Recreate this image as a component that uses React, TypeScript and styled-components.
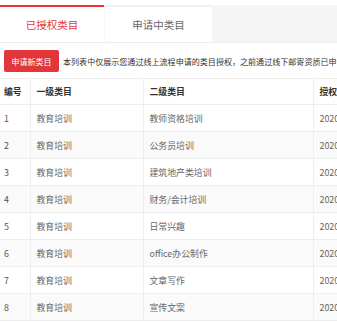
import React from "react"
import styled, { createGlobalStyle } from "styled-components"

const GlobalStyle = createGlobalStyle`
  html, body {
    margin: 0;
    padding: 0;
    background: #ffffff;
    overflow: hidden;
  }
  body {
    font-family: "Noto Sans CJK SC", "Noto Sans", sans-serif;
  }
`

const Page = styled.div`
  width: 337px;
  height: 322px;
  overflow: hidden;
  padding-top: 5px;
  box-sizing: border-box;
`

const TabBar = styled.div`
  display: flex;
  height: 37px;
  background: #f5f5f5;
  border-bottom: 1px solid #eeeeee;
`

const Tab = styled.div<{ $active?: boolean; $w: number }>`
  width: ${(p) => p.$w}px;
  margin-right: 1px;
  box-sizing: border-box;
  display: flex;
  align-items: center;
  justify-content: center;
  background: #ffffff;
  border-top: 2px solid ${(p) => (p.$active ? "#e8353a" : "#f0f0f0")};
  color: ${(p) => (p.$active ? "#e23a3e" : "#666666")};
  font-size: 10.5px;
  padding-bottom: 1px;
`

const Toolbar = styled.div`
  display: flex;
  align-items: center;
  padding: 7px 0 0 4px;
  height: 22px;
  gap: 4px;
  white-space: nowrap;
  overflow: hidden;
`

const ApplyButton = styled.button`
  width: 55px;
  height: 22px;
  border: none;
  border-radius: 2px;
  background: #e1363a;
  color: #ffffff;
  font-family: inherit;
  font-size: 8px;
  padding: 0;
  flex-shrink: 0;
`

const Notice = styled.span`
  font-size: 8.05px;
  color: #333333;
`

const TableWrap = styled.div`
  margin-top: 6px;
  width: 337px;
  overflow: hidden;
`

const Table = styled.table`
  border-collapse: collapse;
  table-layout: fixed;
  width: 472px;
  border-top: 1px solid #eeeeee;
`

const HeadCell = styled.th`
  height: 25px;
  padding: 0 6px;
  text-align: left;
  font-weight: bold;
  font-size: 8.9px;
  color: #333333;
  border-right: 1px solid #eeeeee;
  border-bottom: 1px solid #eeeeee;
  white-space: nowrap;
  overflow: hidden;

  &:first-child {
    padding-left: 4px;
  }
`

const Row = styled.tr<{ $even?: boolean }>`
  background: ${(p) => (p.$even ? "#fafafa" : "#ffffff")};
`

const Cell = styled.td`
  height: 26px;
  padding: 0 6px;
  font-size: 8.9px;
  color: #666666;
  border-right: 1px solid #eeeeee;
  border-bottom: 1px solid #eeeeee;
  white-space: nowrap;
  overflow: hidden;

  &:first-child {
    padding-left: 4px;
    color: #555555;
  }
`

const columns = [30, 113, 170, 159]

const rows = [
  "教师资格培训",
  "公务员培训",
  "建筑地产类培训",
  "财务/会计培训",
  "日常兴趣",
  "office办公制作",
  "文章写作",
  "宣传文案",
]

export default function App() {
  return (
    <Page>
      <GlobalStyle />
      <TabBar>
        <Tab $active $w={104}>已授权类目</Tab>
        <Tab $w={107}>申请中类目</Tab>
      </TabBar>
      <Toolbar>
        <ApplyButton>申请新类目</ApplyButton>
        <Notice>本列表中仅展示您通过线上流程申请的类目授权，之前通过线下邮寄资质已申请的类目请联系客服查询</Notice>
      </Toolbar>
      <TableWrap>
        <Table>
          <colgroup>
            {columns.map((w, i) => (
              <col key={i} style={{ width: w }} />
            ))}
          </colgroup>
          <thead>
            <tr>
              <HeadCell>编号</HeadCell>
              <HeadCell>一级类目</HeadCell>
              <HeadCell>二级类目</HeadCell>
              <HeadCell>授权时间</HeadCell>
            </tr>
          </thead>
          <tbody>
            {rows.map((name, i) => (
              <Row key={name} $even={i % 2 === 1}>
                <Cell>{i + 1}</Cell>
                <Cell>教育培训</Cell>
                <Cell>{name}</Cell>
                <Cell>2020-06-18 10:20:35</Cell>
              </Row>
            ))}
          </tbody>
        </Table>
      </TableWrap>
    </Page>
  )
}
